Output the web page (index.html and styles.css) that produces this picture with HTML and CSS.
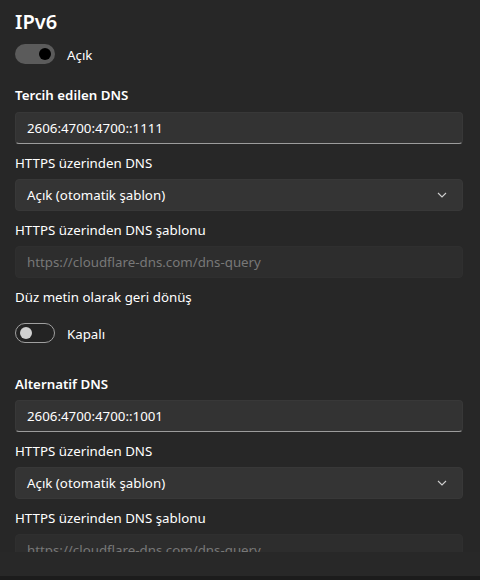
FILE: index.html
```html
<!DOCTYPE html>
<html lang="tr">
<head>
<meta charset="utf-8">
<link rel="stylesheet" href="styles.css">
</head>
<body>
<div class="window">
  <div class="scroll">
    <h1 class="title">IPv6</h1>
    <div class="toggle-row">
      <span class="toggle on"><span class="knob"></span></span>
      <span class="toggle-label">Açık</span>
    </div>

    <div class="label bold sec">Tercih edilen DNS</div>
    <div class="input">2606:4700:4700::1111</div>
    <div class="label">HTTPS üzerinden DNS</div>
    <div class="select">
      <span>Açık (otomatik şablon)</span>
      <svg class="chev" width="10" height="6" viewBox="0 0 10 6"><path d="M1 1 L5 5 L9 1" fill="none" stroke="#cfcfcf" stroke-width="1.1"/></svg>
    </div>
    <div class="label">HTTPS üzerinden DNS şablonu</div>
    <div class="input disabled">https://cloudflare-dns.com/dns-query</div>
    <div class="label">Düz metin olarak geri dönüş</div>
    <div class="toggle-row gap-big">
      <span class="toggle off"><span class="knob"></span></span>
      <span class="toggle-label">Kapalı</span>
    </div>

    <div class="label bold sec2">Alternatif DNS</div>
    <div class="input">2606:4700:4700::1001</div>
    <div class="label">HTTPS üzerinden DNS</div>
    <div class="select">
      <span>Açık (otomatik şablon)</span>
      <svg class="chev" width="10" height="6" viewBox="0 0 10 6"><path d="M1 1 L5 5 L9 1" fill="none" stroke="#cfcfcf" stroke-width="1.1"/></svg>
    </div>
    <div class="label">HTTPS üzerinden DNS şablonu</div>
    <div class="input disabled">https://cloudflare-dns.com/dns-query</div>
  </div>
  <div class="footer"></div>
  <div class="edge"></div>
</div>
</body>
</html>
```
FILE: styles.css
```css
* { box-sizing: border-box; }
html, body { margin: 0; padding: 0; }
body {
  background: #272727;
  color: #ffffff;
  font-family: "Noto Sans", "Open Sans", sans-serif;
  font-size: 13.3px;
  width: 480px;
  height: 580px;
  overflow: hidden;
}
.window { display: flex; flex-direction: column; height: 580px; }
.scroll {
  height: 552px;
  overflow: hidden;
  padding: 8px 17px 0 15px;
  display: flex;
  flex-direction: column;
}
.title {
  margin: 0;
  font-size: 20px;
  font-weight: 600;
  line-height: 28px;
}
.toggle-row {
  display: flex;
  align-items: center;
  gap: 12px;
  margin-top: 8px;
  height: 20px;
}
.toggle-row.gap-big { margin-top: 17px; }
.toggle {
  width: 40px;
  height: 20px;
  border-radius: 10px;
  display: flex;
  align-items: center;
  flex: none;
}
.toggle.on {
  background: #5b5b5b;
  justify-content: flex-end;
  padding-right: 4px;
}
.toggle.on .knob { width: 12px; height: 12px; border-radius: 50%; background: #000; }
.toggle.off {
  border: 1px solid #a0a0a0;
  background: #232323;
  padding-left: 4px;
}
.toggle.off .knob { width: 12px; height: 12px; border-radius: 50%; background: #d0d0d0; }
.toggle-label { line-height: 20px; padding-top: 1px; }
.label {
  line-height: 20px;
  padding-top: 1px;
  height: 20px;
  margin-top: 8px;
  color: #ffffff;
}
.label.bold { font-weight: 600; }
.label.sec { margin-top: 20px; }
.label.sec2 { margin-top: 30px; }
.input, .select {
  height: 32px;
  margin-top: 7px;
  border-radius: 4px;
  padding: 0 11px;
  display: flex;
  align-items: center;
  flex: none;
}
.input {
  background: #333333;
  border: 1px solid #383838;
  border-bottom: 1px solid #9c9c9c;
}
.input.disabled {
  background: #2d2d2d;
  border: 1px solid #2f2f2f;
  color: #787878;
}
.select {
  background: #343434;
  border: 1px solid #383838;
  justify-content: space-between;
  padding-right: 15px;
}
.sec + .input { margin-top: 8px; }
.chev { display: block; }
.footer { height: 24px; background: #282828; flex: none; }
.edge { height: 4px; background: #1c1c1c; flex: none; }
```
